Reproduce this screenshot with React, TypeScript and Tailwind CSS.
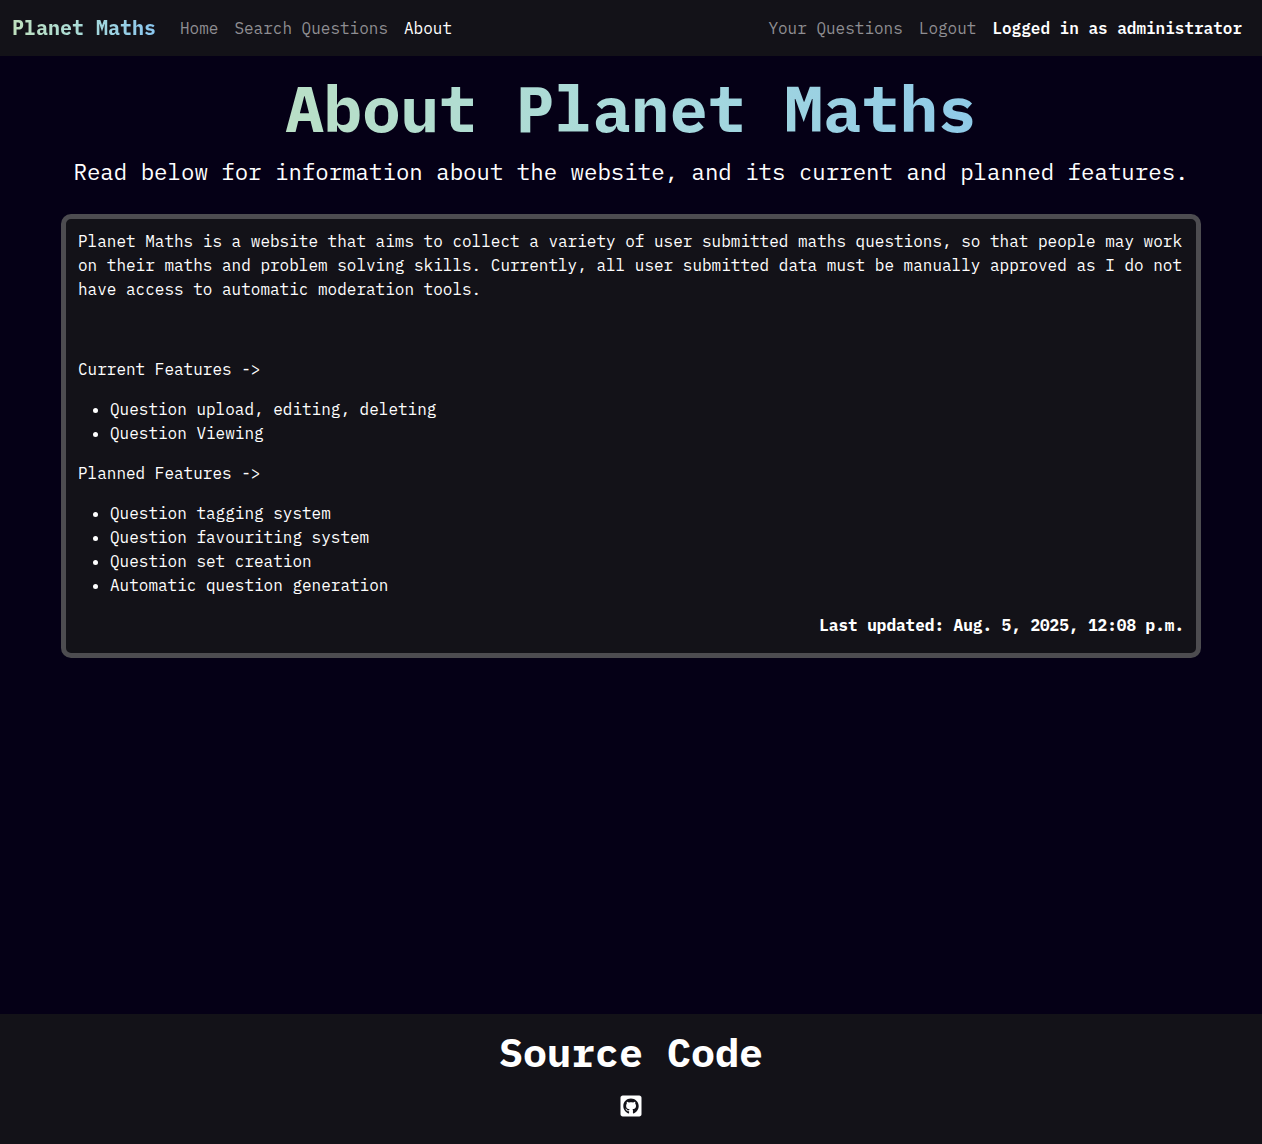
import { FaGithubSquare } from "react-icons/fa";

const muted = "text-[#8f8e92]";

function Features({ title, items }: { title: string; items: string[] }) {
  return (
    <section>
      <p className="mb-4">{title}</p>
      <ul className="mb-4 list-disc pl-8">
        {items.map((item) => (
          <li key={item}>{item}</li>
        ))}
      </ul>
    </section>
  );
}

export default function App() {
  return (
    <div className="flex min-h-[1144px] flex-col bg-[#050016] font-['IBM_Plex_Mono','Liberation_Mono',monospace] text-base text-white">
      <nav className="flex h-14 items-center justify-between bg-[#131218] pr-5 pl-3 whitespace-nowrap">
        <div className="flex items-center">
          <a className="mr-6 bg-linear-to-r from-[#bfe0bd] via-[#a8dad8] to-[#8ac6f0] bg-clip-text text-xl leading-[30px] font-bold text-transparent">
            Planet Maths
          </a>
          <div className="flex gap-4">
            <a className={muted}>Home</a>
            <a className={muted}>Search Questions</a>
            <a>About</a>
          </div>
        </div>
        <div className="flex gap-4">
          <a className={muted}>Your Questions</a>
          <a className={muted}>Logout</a>
          <a className="font-semibold">Logged in as administrator</a>
        </div>
      </nav>
      <main className="flex grow flex-col items-center">
        <h1 className="mt-3.5 bg-linear-to-r from-[#b9dfc6] via-[#a9dadb] to-[#8fcae8] bg-clip-text text-[64px] leading-[77px] font-bold text-transparent">
          About Planet Maths
        </h1>
        <p className="mt-2 text-[22.4px] leading-[34px] whitespace-nowrap">
          Read below for information about the website, and its current and planned features.
        </p>
        <article className="mt-[25px] h-[444px] w-[1140px] rounded-[10px] border-[5px] border-[#4d4c50] bg-[#131218] px-3 pt-2.5">
          <p className="mb-14">
            Planet Maths is a website that aims to collect a variety of user submitted maths questions, so that people
            may work on their maths and problem solving skills. Currently, all user submitted data must be manually
            approved as I do not have access to automatic moderation tools.
          </p>
          <Features
            title="Current Features ->"
            items={["Question upload, editing, deleting", "Question Viewing"]}
          />
          <Features
            title="Planned Features ->"
            items={[
              "Question tagging system",
              "Question favouriting system",
              "Question set creation",
              "Automatic question generation",
            ]}
          />
          <p className="text-right font-bold">Last updated: Aug. 5, 2025, 12:08 p.m.</p>
        </article>
      </main>
      <footer className="flex h-[130px] flex-col items-center bg-[#131218] pt-3.5">
        <h2 className="text-[40px] leading-[48px] font-bold">Source Code</h2>
        <a aria-label="GitHub" className="mt-[18px]">
          <FaGithubSquare className="h-6 w-[22px]" />
        </a>
      </footer>
    </div>
  );
}
